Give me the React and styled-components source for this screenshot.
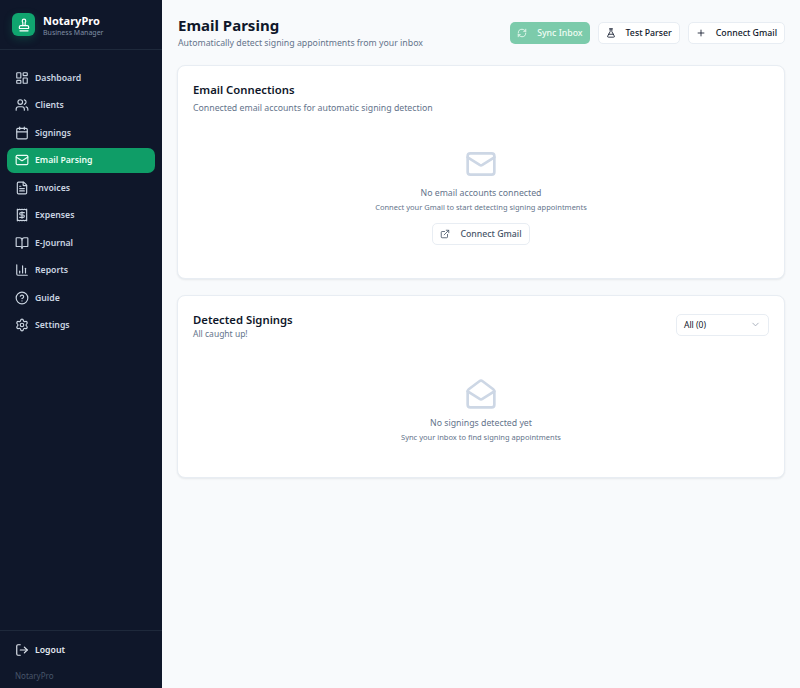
import React from 'react';
import styled, { createGlobalStyle } from 'styled-components';
import {
  LayoutDashboard,
  Users,
  Calendar,
  Mail,
  MailOpen,
  FileText,
  Receipt,
  BookOpen,
  ChartColumn,
  CircleHelp,
  Settings,
  LogOut,
  Stamp,
  RefreshCw,
  FlaskConical,
  Plus,
  ExternalLink,
  ChevronDown,
} from 'lucide-react';

const navItems = [
  { label: 'Dashboard', icon: LayoutDashboard },
  { label: 'Clients', icon: Users },
  { label: 'Signings', icon: Calendar },
  { label: 'Email Parsing', icon: Mail, active: true },
  { label: 'Invoices', icon: FileText },
  { label: 'Expenses', icon: Receipt },
  { label: 'E-Journal', icon: BookOpen },
  { label: 'Reports', icon: ChartColumn },
  { label: 'Guide', icon: CircleHelp },
  { label: 'Settings', icon: Settings },
];

const GlobalStyle = createGlobalStyle`
  html, body {
    margin: 0;
    padding: 0;
    height: 100%;
    background: #f8fafc;
    font-family: "Noto Sans", "Liberation Sans", sans-serif;
  }
  * { box-sizing: border-box; }
`;

const App = () => (
  <>
    <GlobalStyle />
    <Layout>
      <Sidebar>
        <Brand>
          <BrandMark>
            <Stamp size={14} strokeWidth={2} />
          </BrandMark>
          <BrandText>
            <BrandName>NotaryPro</BrandName>
            <BrandTag>Business Manager</BrandTag>
          </BrandText>
        </Brand>
        <Nav>
          {navItems.map(({ label, icon: Icon, active }) => (
            <NavItem key={label} $active={active}>
              <Icon size={14} strokeWidth={2} />
              {label}
            </NavItem>
          ))}
        </Nav>
        <SidebarFooter>
          <LogoutItem>
            <LogOut size={14} strokeWidth={2} />
            Logout
          </LogoutItem>
          <FooterBrand>NotaryPro</FooterBrand>
        </SidebarFooter>
      </Sidebar>
      <Main>
        <PageHeader>
          <div>
            <PageTitle>Email Parsing</PageTitle>
            <PageSub>Automatically detect signing appointments from your inbox</PageSub>
          </div>
          <Actions>
            <PrimaryButton>
              <RefreshCw size={10} strokeWidth={2} />
              Sync Inbox
            </PrimaryButton>
            <OutlineButton>
              <FlaskConical size={10} strokeWidth={2} />
              Test Parser
            </OutlineButton>
            <OutlineButton>
              <Plus size={10} strokeWidth={2} />
              Connect Gmail
            </OutlineButton>
          </Actions>
        </PageHeader>

        <Card>
          <CardTitle>Email Connections</CardTitle>
          <CardSub>Connected email accounts for automatic signing detection</CardSub>
          <EmptyConnections>
            <Mail size={32} strokeWidth={2} color="#cdd7e5" />
            <EmptyTitle>No email accounts connected</EmptyTitle>
            <EmptyText>Connect your Gmail to start detecting signing appointments</EmptyText>
            <GhostButton>
              <ExternalLink size={10} strokeWidth={2} />
              Connect Gmail
            </GhostButton>
          </EmptyConnections>
        </Card>

        <Card>
          <CardHeadRow>
            <div>
              <CardTitle>Detected Signings</CardTitle>
              <CaughtUp>All caught up!</CaughtUp>
            </div>
            <Select>
              All (0)
              <ChevronDown size={11} strokeWidth={2} color="#a3acb9" />
            </Select>
          </CardHeadRow>
          <EmptySignings>
            <MailOpen size={32} strokeWidth={2} color="#cdd7e5" />
            <EmptyTitle>No signings detected yet</EmptyTitle>
            <EmptyText>Sync your inbox to find signing appointments</EmptyText>
          </EmptySignings>
        </Card>
      </Main>
    </Layout>
  </>
);

const Layout = styled.div`
  display: flex;
  width: 800px;
  height: 688px;
  overflow: hidden;
`;

const Sidebar = styled.aside`
  display: flex;
  flex-direction: column;
  flex: 0 0 162px;
  background: #0f172a;
`;

const Brand = styled.div`
  display: flex;
  align-items: center;
  gap: 8px;
  height: 50px;
  padding: 0 12px;
  border-bottom: 1px solid #1e293b;
`;

const BrandMark = styled.div`
  display: flex;
  align-items: center;
  justify-content: center;
  width: 23px;
  height: 23px;
  border-radius: 6px;
  color: #fff;
  background: #10a56f;
  box-shadow: 0 3px 8px rgba(16, 165, 111, 0.25);
`;

const BrandText = styled.div`
  padding-top: 3px;
`;

const BrandName = styled.div`
  color: #fff;
  font-size: 11px;
  font-weight: 700;
  line-height: 14px;
`;

const BrandTag = styled.div`
  color: #7f8ea3;
  font-size: 7px;
  line-height: 10px;
`;

const Nav = styled.nav`
  display: flex;
  flex-direction: column;
  gap: 2px;
  padding: 15px 7px 0;
`;

const NavItem = styled.div`
  display: flex;
  align-items: center;
  gap: 6px;
  height: 25.5px;
  padding: 0 8px;
  border-radius: 7px;
  color: ${(p) => (p.$active ? '#ecfdf5' : '#cbd5e1')};
  background: ${(p) => (p.$active ? '#0f9d67' : 'transparent')};
  font-size: 8.7px;
  font-weight: 600;
`;

const SidebarFooter = styled.div`
  margin-top: auto;
  padding: 7px 7px 0;
  border-top: 1px solid #1e293b;
`;

const LogoutItem = styled(NavItem)`
  color: #e2e8f0;
`;

const FooterBrand = styled.div`
  padding: 7px 8px 7px;
  color: #475569;
  font-size: 8px;
  line-height: 11px;
`;

const Main = styled.main`
  flex: 1;
  display: flex;
  flex-direction: column;
  gap: 16px;
  padding: 15px 15px 0;
  min-width: 0;
`;

const PageHeader = styled.header`
  display: flex;
  align-items: flex-start;
  justify-content: space-between;
  padding-left: 1px;
`;

const PageTitle = styled.h1`
  margin: 0;
  color: #0f172a;
  font-size: 15px;
  font-weight: 700;
  line-height: 21px;
`;

const PageSub = styled.p`
  margin: 2px 0 0;
  color: #64748b;
  font-size: 8.75px;
  line-height: 11px;
`;

const Actions = styled.div`
  display: flex;
  gap: 8px;
  margin-top: 6.5px;
`;

const ButtonBase = styled.button`
  display: flex;
  align-items: center;
  gap: 10px;
  height: 22px;
  padding: 0 7px;
  border-radius: 5px;
  font-family: inherit;
  font-size: 8.75px;
  font-weight: 500;
`;

const PrimaryButton = styled(ButtonBase)`
  border: 0;
  color: #f0fdf4;
  background: #7ccbab;
`;

const OutlineButton = styled(ButtonBase)`
  border: 1px solid #e8edf3;
  color: #0f172a;
  background: #fff;
`;

const GhostButton = styled(OutlineButton)`
  margin-top: 10px;
  color: #475569;
`;

const Card = styled.section`
  padding: 15px;
  border: 1px solid #e8edf3;
  border-radius: 8px;
  background: #fff;
  box-shadow: 0 1px 2px rgba(15, 23, 42, 0.08);
`;

const CardTitle = styled.h2`
  margin: 0;
  color: #0f172a;
  font-size: 11.3px;
  font-weight: 600;
  line-height: 17px;
`;

const CardSub = styled.p`
  margin: 4px 0 0;
  color: #64748b;
  font-size: 8.75px;
  line-height: 12px;
`;

const CaughtUp = styled.p`
  margin: 0;
  color: #64748b;
  font-size: 8.5px;
  line-height: 11px;
`;

const CardHeadRow = styled.div`
  display: flex;
  align-items: flex-start;
  justify-content: space-between;
`;

const Select = styled.div`
  display: flex;
  align-items: center;
  justify-content: space-between;
  width: 93px;
  height: 22px;
  margin-top: 3px;
  padding: 0 7px;
  border: 1px solid #e8edf3;
  border-radius: 5px;
  color: #0f172a;
  font-size: 8.5px;
`;

const EmptyState = styled.div`
  display: flex;
  flex-direction: column;
  align-items: center;
`;

const EmptyConnections = styled(EmptyState)`
  padding: 34px 0 17.5px;
`;

const EmptySignings = styled(EmptyState)`
  padding: 39px 0 19px;
`;

const EmptyTitle = styled.div`
  margin-top: 7px;
  color: #64748b;
  font-size: 8.75px;
  line-height: 13px;
`;

const EmptyText = styled.div`
  margin-top: 2px;
  color: #64748b;
  font-size: 7.5px;
  line-height: 11px;
`;

export default App;
